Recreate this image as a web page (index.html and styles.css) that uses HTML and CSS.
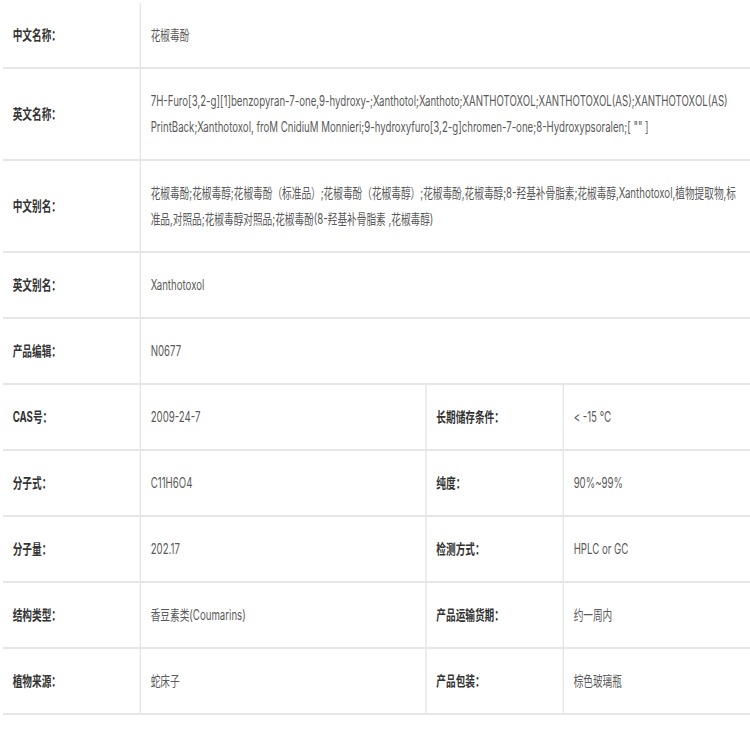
FILE: index.html
```html
<!DOCTYPE html>
<html lang="zh-CN">
<head>
<meta charset="utf-8">
<title>花椒毒酚</title>
<link rel="stylesheet" href="styles.css">
</head>
<body>
<div class="frame">
<div class="sheet">
  <div class="row">
    <div class="cell label">中文名称：</div>
    <div class="cell value span3">花椒毒酚</div>
  </div>
  <div class="row">
    <div class="cell label">英文名称：</div>
    <div class="cell value span3">7H-Furo[3,2-g][1]benzopyran-7-one,9-hydroxy-;Xanthotol;Xanthoto;XANTHOTOXOL;XANTHOTOXOL(AS);XANTHOTOXOL(AS)<br>PrintBack;Xanthotoxol, froM CnidiuM Monnieri;9-hydroxyfuro[3,2-g]chromen-7-one;8-Hydroxypsoralen;[ "" ]</div>
  </div>
  <div class="row">
    <div class="cell label">中文别名：</div>
    <div class="cell value span3">花椒毒酚;花椒毒醇;花椒毒酚（标准品）;花椒毒酚（花椒毒醇）;花椒毒酚,花椒毒醇;8-羟基补骨脂素;花椒毒醇,Xanthotoxol,植物提取物,标<br>准品,对照品;花椒毒醇对照品;花椒毒酚(8-羟基补骨脂素 ,花椒毒醇)</div>
  </div>
  <div class="row">
    <div class="cell label">英文别名：</div>
    <div class="cell value span3">Xanthotoxol</div>
  </div>
  <div class="row">
    <div class="cell label">产品编辑：</div>
    <div class="cell value span3">N0677</div>
  </div>
  <div class="row">
    <div class="cell label">CAS号：</div>
    <div class="cell value">2009-24-7</div>
    <div class="cell label">长期储存条件：</div>
    <div class="cell value">&lt; -15 ℃</div>
  </div>
  <div class="row">
    <div class="cell label">分子式：</div>
    <div class="cell value">C11H6O4</div>
    <div class="cell label">纯度：</div>
    <div class="cell value">90%~99%</div>
  </div>
  <div class="row">
    <div class="cell label">分子量：</div>
    <div class="cell value">202.17</div>
    <div class="cell label">检测方式：</div>
    <div class="cell value">HPLC or GC</div>
  </div>
  <div class="row">
    <div class="cell label">结构类型：</div>
    <div class="cell value">香豆素类(Coumarins)</div>
    <div class="cell label">产品运输货期：</div>
    <div class="cell value">约一周内</div>
  </div>
  <div class="row">
    <div class="cell label">植物来源：</div>
    <div class="cell value">蛇床子</div>
    <div class="cell label">产品包装：</div>
    <div class="cell value">棕色玻璃瓶</div>
  </div>
</div>
</div>
</body>
</html>
```
FILE: styles.css
```css
html, body {
  margin: 0;
  padding: 0;
  background: #ffffff;
  overflow: hidden;
}

.frame {
  width: 747px;
  height: 750px;
  margin-left: 3px;
  overflow: hidden;
}

.sheet {
  width: 1083px;
  margin-top: 3px;
  transform: scaleX(0.69);
  transform-origin: 0 0;
  font-family: "Inter", "Noto Sans CJK SC", sans-serif;
  font-size: 14px;
  line-height: 26px;
}

.row {
  display: grid;
  grid-template-columns: 200px 414px 199px 1fr;
  border-bottom: 2px solid #e6e6e6;
}

.cell {
  display: flex;
  flex-direction: column;
  justify-content: center;
  padding: 19px 10px 19px 14px;
  white-space: nowrap;
}

.cell:not(:last-child) {
  border-right: 2px solid #e6e6e6;
}

.span3 {
  grid-column: 2 / 5;
  display: block;
}

.label {
  color: #333333;
  font-weight: bold;
}

.value {
  color: #5a5a5a;
}
```
